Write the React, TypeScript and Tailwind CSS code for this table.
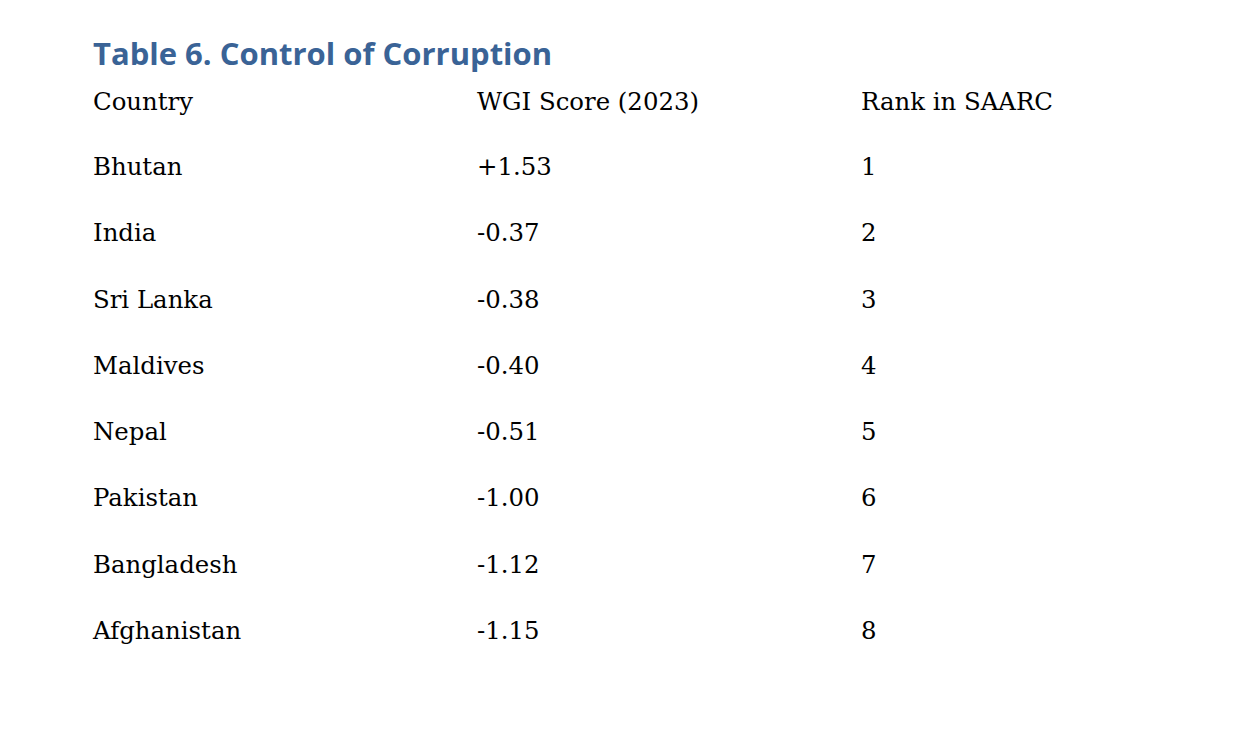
const ROWS: [string, string, string][] = [
  ['Bhutan', '+1.53', '1'],
  ['India', '-0.37', '2'],
  ['Sri Lanka', '-0.38', '3'],
  ['Maldives', '-0.40', '4'],
  ['Nepal', '-0.51', '5'],
  ['Pakistan', '-1.00', '6'],
  ['Bangladesh', '-1.12', '7'],
  ['Afghanistan', '-1.15', '8'],
];

function Row({ cells, header }: { cells: [string, string, string]; header?: boolean }) {
  return (
    <div
      className={`grid grid-cols-[384px_384px_1fr] text-[24.4px] leading-[82.6px] text-black ${
        header ? 'h-[65.5px]' : 'h-[66.3px]'
      }`}
    >
      {cells.map((c, i) => (
        <div key={i} className="h-full whitespace-nowrap">
          {c}
        </div>
      ))}
    </div>
  );
}

export default function App() {
  return (
    <div className="min-h-[734px] w-[1258px] bg-white pl-[93px] pt-[37.5px] font-['DejaVu_Serif',serif]">
      <h1 className="h-[30px] font-['Open_Sans',sans-serif] text-[31px] font-bold leading-[30px] text-[#3a6396]">
        Table 6. Control of Corruption
      </h1>
      <div className="-mt-[7px]">
        <Row cells={['Country', 'WGI Score (2023)', 'Rank in SAARC']} header />
        {ROWS.map((r) => (
          <Row key={r[0]} cells={r} />
        ))}
      </div>
    </div>
  );
}
